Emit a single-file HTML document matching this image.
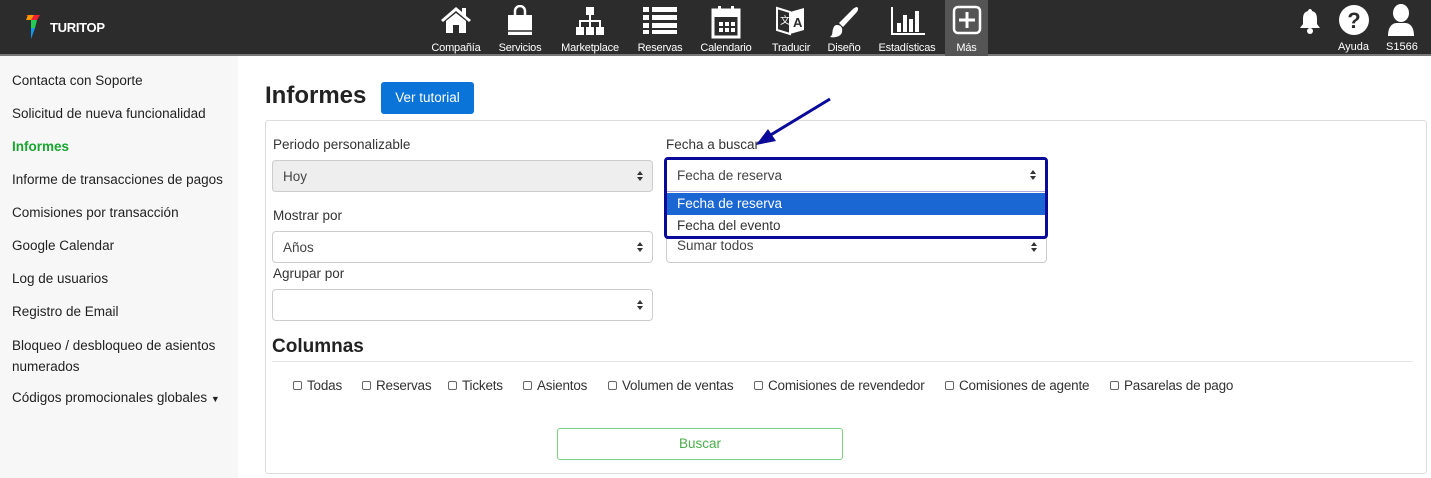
<!DOCTYPE html>
<html><head><meta charset="utf-8"><style>
*{box-sizing:border-box;margin:0;padding:0}
body{width:1431px;height:478px;overflow:hidden;font-family:"Liberation Sans",sans-serif;background:#fff;position:relative;color:#333}
.top{position:absolute;left:0;top:0;width:1431px;height:56px;background:#2c2c2c;border-bottom:2px solid #777}
.logo{position:absolute;left:26px;top:15px}
.logo span{position:absolute;left:24px;top:5px;color:#fff;font-weight:bold;font-size:13px;letter-spacing:-0.3px}
.nav{position:absolute;top:0;height:56px;text-align:center;color:#fff;font-size:11px}
.nav .lb{position:absolute;top:42px;left:0;right:0;white-space:nowrap;letter-spacing:-0.2px}
.nav svg{position:absolute;top:5px;left:50%;transform:translateX(-50%)}
.side{position:absolute;left:0;top:56px;width:238px;height:422px;background:#f7f7f7}
.side div{position:absolute;left:12px;font-size:13.5px;color:#222}
.abs{position:absolute}
.sel{position:absolute;height:32px;border:1px solid #ccc;border-radius:4px;background:#fff;font-size:13.5px;padding:8px 10px;color:#444}
.sel:after{content:"";position:absolute;right:9px;top:10px;border:3.5px solid transparent;border-bottom:4px solid #333;border-top:none}
.sel:before{content:"";position:absolute;right:9px;top:16px;border:3.5px solid transparent;border-top:4px solid #333;border-bottom:none}
.lbl{position:absolute;font-size:13.5px;color:#333}
.cb{position:absolute;top:378px;font-size:13.5px;color:#333;letter-spacing:-0.2px}
.cb i{display:inline-block;width:9px;height:9px;border:1px solid #666;border-radius:2px;margin-right:5px;vertical-align:0}
</style></head><body>
<div class="top">
<div class="logo"><svg width="14" height="24" viewBox="0 0 14 24"><path d="M0 0h14l-3 5H5z" fill="#e23"/><path d="M2 0h6L5 5H0z" fill="#f90"/><path d="M5 5h6l-2 8H5z" fill="#2c5"/><path d="M5 13h4l-4 11z" fill="#19e"/></svg><span>TURITOP</span></div>
<div class="nav" style="left:427px;width:58px"><svg width="32" height="30" viewBox="0 0 32 30"><path d="M16 2L1 15l2 2 13-11 13 11 2-2-5-4V3h-4v4z" fill="#fff"/><path d="M6 16l10-8 10 8v12h-7v-8h-6v8H6z" fill="#fff"/></svg><div class="lb">Compañía</div></div>
<div class="nav" style="left:493px;width:54px"><svg width="32" height="32" viewBox="0 0 32 32"><path d="M11 10V6a5 5 0 0 1 10 0v4" stroke="#fff" stroke-width="2.5" fill="none"/><path d="M4 10h24v20H4z" fill="#fff"/><path d="M4 26h24" stroke="#2c2c2c" stroke-width="1.5"/></svg><div class="lb">Servicios</div></div>
<div class="nav" style="left:556px;width:68px"><svg width="32" height="32" viewBox="0 0 32 32" fill="#fff"><rect x="12" y="2" width="8" height="8"/><rect x="2" y="22" width="8" height="8"/><rect x="12" y="22" width="8" height="8"/><rect x="22" y="22" width="8" height="8"/><path d="M15 10h2v5h10v7h-2v-5H17v5h-2v-5H7v5H5v-7h10z"/></svg><div class="lb">Marketplace</div></div>
<div class="nav" style="left:634px;width:52px"><svg width="36" height="30" viewBox="0 0 36 30" fill="#fff"><rect x="1" y="2" width="6" height="5"/><rect x="10" y="2" width="25" height="5"/><rect x="1" y="10" width="6" height="5"/><rect x="10" y="10" width="25" height="5"/><rect x="1" y="18" width="6" height="5"/><rect x="10" y="18" width="25" height="5"/><rect x="1" y="25" width="6" height="4"/><rect x="10" y="25" width="25" height="4"/></svg><div class="lb">Reservas</div></div>
<div class="nav" style="left:695px;width:62px"><svg width="32" height="34" viewBox="0 0 32 34"><rect x="3" y="5" width="26" height="27" fill="none" stroke="#fff" stroke-width="3"/><rect x="3" y="5" width="26" height="7" fill="#fff"/><path d="M9 17h4v4H9zM15 17h4v4h-4zM21 17h4v4h-4zM9 23h4v4H9zM15 23h4v4h-4zM21 23h4v4h-4z" fill="#fff"/><rect x="8" y="1" width="3" height="7" fill="#fff"/><rect x="21" y="1" width="3" height="7" fill="#fff"/></svg><div class="lb">Calendario</div></div>
<div class="nav" style="left:766px;width:50px"><svg width="34" height="34" viewBox="0 0 34 34"><path d="M3 3l13 4v22L3 25z" fill="none" stroke="#fff" stroke-width="2"/><path d="M16 7l14-4v22l-14 4z" fill="#fff"/><text x="19" y="22" font-size="13" font-family="Liberation Sans" fill="#2c2c2c" font-weight="bold">A</text><text x="6" y="19" font-size="10" fill="#fff">文</text></svg><div class="lb">Traducir</div></div>
<div class="nav" style="left:824px;width:40px"><svg width="34" height="34" viewBox="0 0 34 34" fill="#fff"><path d="M30 2c2 1 1 4-1 6L16 22l-4-4L26 4c1-1 3-2 4-2z"/><path d="M10 20c4 0 6 3 5 7-1 5-8 6-12 5 3-2 2-5 3-8 1-3 2-4 4-4z"/></svg><div class="lb">Diseño</div></div>
<div class="nav" style="left:874px;width:66px"><svg width="36" height="32" viewBox="0 0 36 32" fill="#fff"><path d="M2 2h2v26h32v2H2z"/><rect x="8" y="18" width="4" height="9"/><rect x="14" y="10" width="4" height="17"/><rect x="20" y="14" width="4" height="13"/><rect x="26" y="6" width="4" height="21"/></svg><div class="lb">Estadísticas</div></div>
<div class="nav" style="left:945px;width:43px;background:#555"><svg width="30" height="30" viewBox="0 0 30 30"><rect x="2" y="2" width="26" height="26" rx="4" fill="none" stroke="#fff" stroke-width="2.5"/><path d="M15 7v16M7 15h16" stroke="#fff" stroke-width="3"/></svg><div class="lb">Más</div></div>
<svg class="abs" style="left:1298px;top:8px" width="24" height="26" viewBox="0 0 24 26" fill="#fff"><path d="M12 1c1 0 2 1 2 2 4 1 5 4 5 8v5l3 4H2l3-4v-5c0-4 1-7 5-8 0-1 1-2 2-2z"/><circle cx="12" cy="23" r="3"/></svg>
<svg class="abs" style="left:1338px;top:4px" width="32" height="32" viewBox="0 0 32 32"><circle cx="16" cy="16" r="15" fill="#fff"/><text x="16" y="24" text-anchor="middle" font-size="22" font-weight="bold" font-family="Liberation Sans" fill="#2c2c2c">?</text></svg>
<div class="abs" style="left:1338px;top:41px;color:#fff;font-size:11px">Ayuda</div>
<svg class="abs" style="left:1386px;top:3px" width="30" height="34" viewBox="0 0 30 34" fill="#fff"><ellipse cx="15" cy="10" rx="8" ry="9"/><path d="M2 33c0-9 4-13 9-13h8c5 0 9 4 9 13z"/></svg>
<div class="abs" style="left:1386px;top:41px;color:#fff;font-size:11px">S1566</div>
</div>
<div class="side">
<div style="top:17px">Contacta con Soporte</div>
<div style="top:50px">Solicitud de nueva funcionalidad</div>
<div style="top:83px;color:#1aa531;font-weight:bold">Informes</div>
<div style="top:116px">Informe de transacciones de pagos</div>
<div style="top:149px">Comisiones por transacción</div>
<div style="top:182px">Google Calendar</div>
<div style="top:215px">Log de usuarios</div>
<div style="top:248px">Registro de Email</div>
<div style="top:279px;line-height:21px">Bloqueo / desbloqueo de asientos<br>numerados</div>
<div style="top:334px">Códigos promocionales globales <span style="font-size:9px">▼</span></div>
</div>
<div class="abs" style="left:265px;top:82px;font-size:24px;font-weight:bold;color:#222">Informes</div>
<div class="abs" style="left:381px;top:82px;width:93px;height:32px;background:#0a74d8;border-radius:3px;color:#fff;font-size:13.5px;text-align:center;line-height:32px">Ver tutorial</div>
<div class="abs" style="left:265px;top:120px;width:1162px;height:354px;border:1px solid #ddd;border-radius:3px"></div>
<div class="lbl" style="left:273px;top:137px">Periodo personalizable</div>
<div class="sel" style="left:272px;top:160px;width:381px;background:#eee">Hoy</div>
<div class="lbl" style="left:273px;top:208px">Mostrar por</div>
<div class="sel" style="left:272px;top:231px;width:381px">Años</div>
<div class="lbl" style="left:273px;top:266px">Agrupar por</div>
<div class="sel" style="left:272px;top:289px;width:381px"></div>
<div class="lbl" style="left:666px;top:137px">Fecha a buscar</div>
<div class="sel" style="left:666px;top:231px;width:381px;padding-top:6px">Sumar todos</div>
<div class="abs" style="left:664px;top:157px;width:384px;height:82px;border:3px solid #0a0a9a;border-radius:4px;background:#fff">
<div class="sel" style="left:0;top:0;width:378px;height:32px;border:none;border-bottom:1px solid #aad;border-radius:0;padding:8px 10px">Fecha de reserva</div>
<div class="abs" style="left:0;top:33px;width:378px;height:22px;background:#1a66d2;color:#fff;font-size:13.5px;padding:3px 10px">Fecha de reserva</div>
<div class="abs" style="left:0;top:55px;width:378px;height:22px;color:#333;font-size:13.5px;padding:3px 10px">Fecha del evento</div>
</div>
<svg class="abs" style="left:750px;top:96px" width="85" height="55" viewBox="0 0 85 55"><path d="M80 3L14 43" stroke="#0a0a9a" stroke-width="3"/><path d="M6 49l20-4-8-12z" fill="#0a0a9a"/></svg>
<div class="abs" style="left:272px;top:336px;font-size:19px;font-weight:bold;color:#222">Columnas</div>
<div class="abs" style="left:272px;top:361px;width:1141px;height:1px;background:#e5e5e5"></div>
<div class="cb" style="left:293px"><i></i>Todas</div>
<div class="cb" style="left:362px"><i></i>Reservas</div>
<div class="cb" style="left:448px"><i></i>Tickets</div>
<div class="cb" style="left:523px"><i></i>Asientos</div>
<div class="cb" style="left:608px"><i></i>Volumen de ventas</div>
<div class="cb" style="left:754px"><i></i>Comisiones de revendedor</div>
<div class="cb" style="left:945px"><i></i>Comisiones de agente</div>
<div class="cb" style="left:1110px"><i></i>Pasarelas de pago</div>
<div class="abs" style="left:557px;top:428px;width:286px;height:32px;border:1px solid #7ccf80;border-radius:3px;color:#4cae4c;font-size:13.5px;text-align:center;line-height:30px">Buscar</div>
</body></html>
